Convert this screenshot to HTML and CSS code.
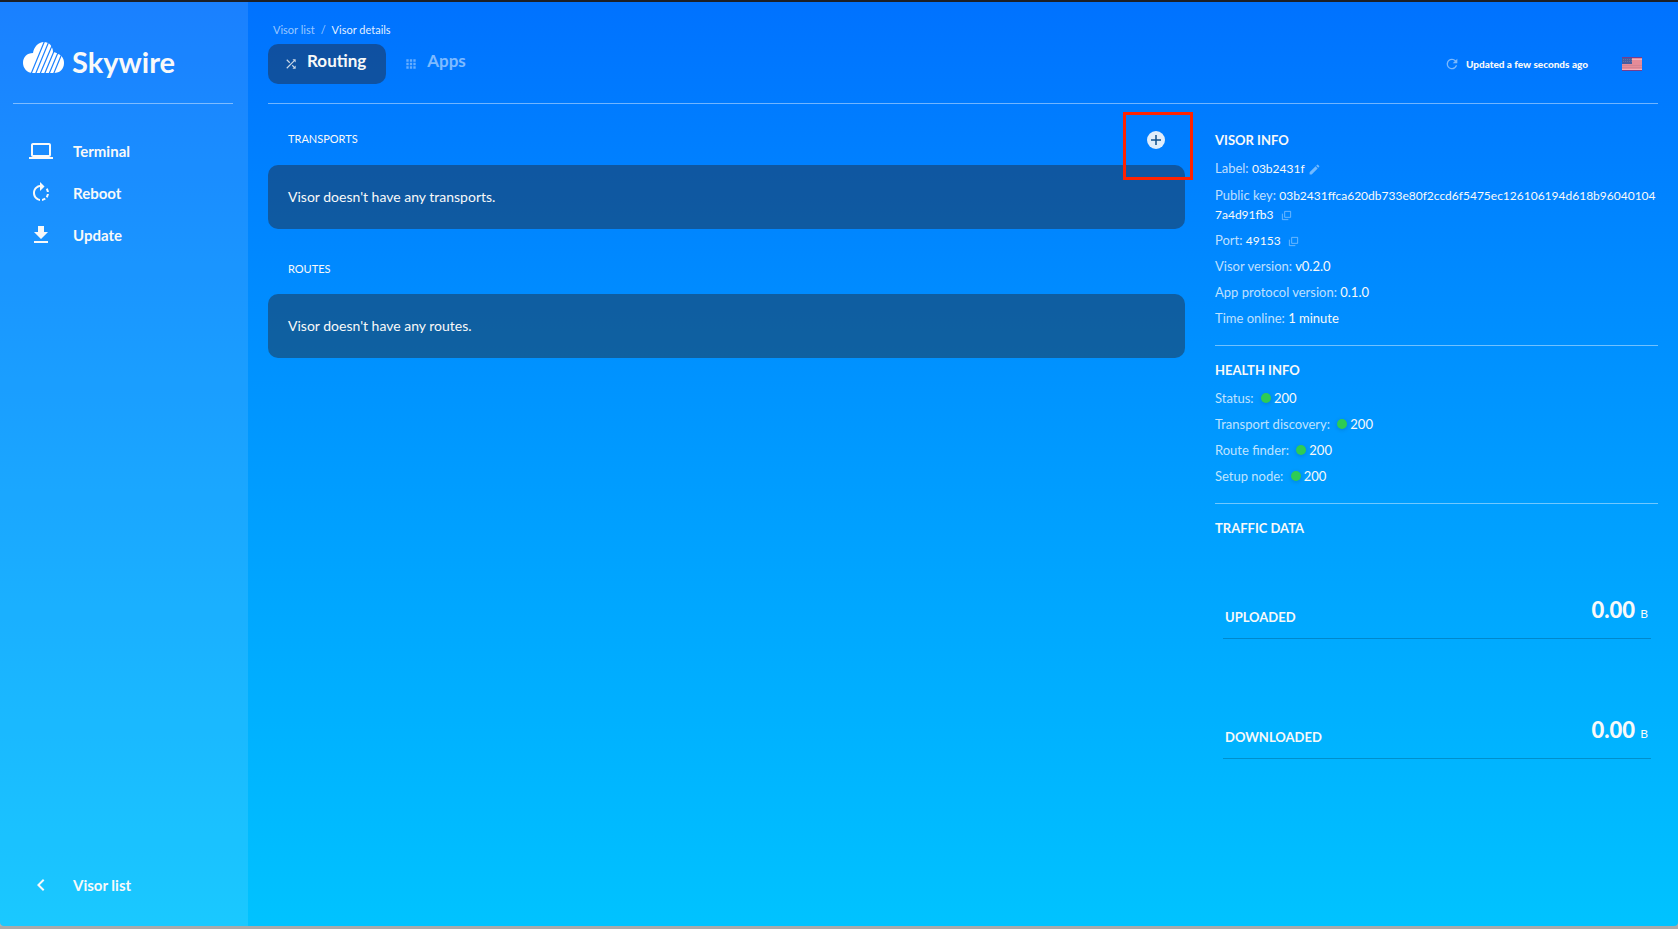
FILE: index.html
```html
<!DOCTYPE html>
<html lang="en">
<head>
<meta charset="utf-8">
<meta name="viewport" content="width=device-width, initial-scale=1">
<title>Skywire - Visor details</title>
<link rel="stylesheet" href="styles.css">
</head>
<body>
<svg class="defs" aria-hidden="true">
  <symbol id="copy" viewBox="0 0 24 24"><path d="M8 3h13v13H8zM3 8v13h13" fill="none" stroke="currentColor" stroke-width="2"/></symbol>
</svg>
<div class="app">
  <aside class="sidebar">
    <div class="brand">
      <svg class="cloud" viewBox="0 0 41 31" aria-hidden="true">
        <path fill="#fff" d="M10 31C4 31 0 26 0 21c0-6 4-10 10-10C11 5 15 0 21 0c5 0 9 4 9 10 2 0 4 1 5 2 4 1 6 5 6 9 0 6-4 10-10 10z"/>
        <path class="cuts" d="M8 32 22-2M12.500 32 26.500-2M17 32 31-1M21.500 32 34 2M26 32 36.500 7M30.500 32 40 9"/>
      </svg>
      <span>Skywire</span>
    </div>
    <nav class="menu">
      <button class="item" type="button">
        <svg viewBox="0 0 24 24"><path d="M20 18c1.100 0 1.990-.9 1.990-2L22 6c0-1.100-.9-2-2-2H4c-1.100 0-2 .9-2 2v10c0 1.100.9 2 2 2H0v2h24v-2h-4zM4 6h16v10H4V6z"/></svg>
        <span>Terminal</span>
      </button>
      <button class="item" type="button">
        <svg viewBox="0 0 24 24"><path d="M15.550 5.550 11 1v3.070C7.060 4.560 4 7.920 4 12s3.050 7.440 7 7.930v-2.020c-2.840-.48-5-2.940-5-5.910s2.160-5.430 5-5.910V10l4.550-4.450zM19.930 11c-.17-1.390-.72-2.730-1.620-3.890l-1.420 1.420c.54.75.88 1.600 1.020 2.470h2.020zM13 17.900v2.020c1.390-.17 2.740-.71 3.900-1.610l-1.440-1.440c-.75.54-1.590.89-2.460 1.030zm3.890-2.420 1.420 1.410c.9-1.160 1.450-2.500 1.620-3.890h-2.020c-.14.87-.48 1.720-1.020 2.480z"/></svg>
        <span>Reboot</span>
      </button>
      <button class="item" type="button">
        <svg viewBox="0 0 24 24"><path d="M19 9h-4V3H9v6H5l7 7 7-7zM5 18v2h14v-2H5z"/></svg>
        <span>Update</span>
      </button>
    </nav>
    <a class="item back" href="#list">
      <svg viewBox="0 0 24 24"><path d="M15.410 7.410 14 6l-6 6 6 6 1.410-1.410L10.830 12z"/></svg>
      <span>Visor list</span>
    </a>
  </aside>
  <div class="page">
    <header class="top">
      <div>
        <nav class="crumbs" aria-label="Breadcrumb"><a href="#list">Visor list</a><span>/</span><span class="here">Visor details</span></nav>
        <nav class="tabs">
          <a class="tab active" href="#routing"><svg viewBox="0 0 24 24"><path d="M10.590 9.170 5.410 4 4 5.410l5.170 5.170 1.420-1.410zM14.500 4l2.040 2.040L4 18.590 5.410 20 17.960 7.460 20 9.500V4h-5.500zm.33 9.410-1.410 1.410 3.130 3.130L14.500 20H20v-5.500l-2.040 2.040-3.130-3.130z"/></svg>Routing</a>
          <a class="tab" href="#apps"><svg viewBox="0 0 24 24"><path d="M4 4h4v4H4zM10 4h4v4h-4zM16 4h4v4h-4zM4 10h4v4H4zM10 10h4v4h-4zM16 10h4v4h-4zM4 16h4v4H4zM10 16h4v4h-4zM16 16h4v4h-4z"/></svg>Apps</a>
        </nav>
      </div>
      <div class="status">
        <button class="refresh" type="button"><svg viewBox="0 0 24 24"><path d="M17.650 6.350A7.960 7.960 0 0 0 12 4a8 8 0 1 0 7.730 10h-2.080A6 6 0 1 1 12 6c1.660 0 3.140.69 4.220 1.780L13 11h7V4z"/></svg>Updated a few seconds ago</button>
        <button class="language" type="button" aria-label="Language: English">
          <svg viewBox="0 0 20 14" aria-hidden="true"><path fill="#e58b98" d="M0 0h20v14H0z"/><path fill="#f4adb8" d="M10 2h10v1H10zM0 12h20v1H0z"/><path fill="#d58492" d="M0 8h20v1H0zM0 10h20v1H0z"/><path fill="#763d8e" d="M0 0h20v1H0zM0 13h20v1H0z"/><path fill="#455da0" d="M0 1h10v6H0z"/><path d="M1 2.500h9M1 4.500h9" stroke="#6473a1" stroke-dasharray="1 1"/></svg>
        </button>
      </div>
    </header>
    <div class="columns">
      <main class="lists">
        <section>
          <div class="list-head">
            <h2>Transports</h2>
            <button class="add" type="button" aria-label="Add transport"><svg viewBox="0 0 18 18"><circle cx="9" cy="9" r="9" fill="#e0edfb"/><path d="M9 4v10M4 9h10" stroke="#0f508c" stroke-width="1.500"/></svg></button>
          </div>
          <p class="card">Visor doesn't have any transports.</p>
        </section>
        <section>
          <div class="list-head"><h2>Routes</h2></div>
          <p class="card">Visor doesn't have any routes.</p>
        </section>
      </main>
      <aside class="details">
        <section class="block">
          <h3>Visor info</h3>
          <p>Label: <b class="hash">03b2431f</b> <button class="mini" type="button" aria-label="Edit label"><svg class="edit" viewBox="0 0 24 24"><path d="M3 17.250V21h3.750L17.810 9.940l-3.750-3.750L3 17.250zM20.710 7.040a1 1 0 0 0 0-1.410l-2.340-2.340a1 1 0 0 0-1.410 0l-1.830 1.830 3.750 3.750 1.830-1.830z"/></svg></button></p>
          <p class="key">Public key: <b class="hash">03b2431ffca620db733e80f2ccd6f5475ec126106194d618b960401047a4d91fb3</b> <button class="mini copy" type="button" aria-label="Copy public key"><svg><use href="#copy"/></svg></button></p>
          <p>Port: <b class="hash">49153</b> <button class="mini copy" type="button" aria-label="Copy port"><svg><use href="#copy"/></svg></button></p>
          <p>Visor version: <b>v0.2.0</b></p>
          <p>App protocol version: <b>0.1.0</b></p>
          <p>Time online: <b>1 minute</b></p>
        </section>
        <section class="block">
          <h3>Health info</h3>
          <p>Status: <i class="dot"></i><b>200</b></p>
          <p>Transport discovery: <i class="dot"></i><b>200</b></p>
          <p>Route finder: <i class="dot"></i><b>200</b></p>
          <p>Setup node: <i class="dot"></i><b>200</b></p>
        </section>
        <section class="block">
          <h3>Traffic data</h3>
          <div class="charts">
            <div class="traffic"><span class="name">Uploaded</span><span class="amount">0.00 <small>B</small></span></div>
            <div class="traffic"><span class="name">Downloaded</span><span class="amount">0.00 <small>B</small></span></div>
          </div>
        </section>
      </aside>
    </div>
  </div>
</div>
<div class="marker"></div>
</body>
</html>
```
FILE: styles.css
```css
* { box-sizing: border-box; }
body {
  margin: 0;
  background: #aaa;
  color: #f8f9f9;
  font-family: Lato, "Open Sans", sans-serif;
  font-size: 13px;
}
h2, h3, p { margin: 0; }
button { border: 0; padding: 0; background: none; color: inherit; font: inherit; cursor: pointer; }
a { color: inherit; text-decoration: none; }
svg { display: block; fill: currentColor; }
.defs { display: none; }

.app {
  display: flex;
  min-height: calc(100vh - 3px);
  border-top: 2px solid #1c1f26;
  border-radius: 0 0 4px 4px;
  background: linear-gradient(#0072ff, #00c3ff);
}

/* Sidebar */
.sidebar {
  display: flex;
  flex-direction: column;
  flex: 0 0 248px;
  padding: 0 15px 26px 13px;
  background: rgba(255, 255, 255, 0.1);
}
.brand {
  display: flex;
  align-items: center;
  gap: 8px;
  height: 102px;
  padding: 10px 0 0 10px;
  border-bottom: 1px solid rgba(255, 255, 255, 0.44);
  font-size: 29px;
  font-weight: 700;
}
.brand span { padding-top: 8px; }
.cloud { width: 41px; height: 31px; }
.cuts { fill: none; stroke: #1c82ff; stroke-width: 1.2; }
.menu { padding-top: 26px; }
.item {
  display: flex;
  align-items: center;
  gap: 20px;
  width: 100%;
  height: 42px;
  padding-left: 16px;
  font-size: 15px;
  font-weight: 700;
}
.item svg { width: 24px; height: 24px; }
.back { margin-top: auto; height: 30px; }

/* Header */
.page { flex: 1; min-width: 0; padding: 0 20px; }
.top {
  display: flex;
  justify-content: space-between;
  height: 102px;
  padding-top: 20px;
  border-bottom: 1px solid rgba(255, 255, 255, 0.44);
}
.crumbs {
  display: flex;
  gap: 6px;
  height: 22px;
  padding-left: 5px;
  font-size: 11px;
  line-height: 16px;
  color: rgba(255, 255, 255, 0.6);
}
.crumbs .here { color: rgba(255, 255, 255, 0.9); }
.tabs { display: flex; gap: 2px; }
.tab {
  display: flex;
  gap: 9px;
  height: 40px;
  padding: 0 20px 0 16px;
  border-radius: 10px;
  font-size: 17px;
  font-weight: 700;
  line-height: 34px;
  color: rgba(255, 255, 255, 0.5);
}
.tab.active { background: rgba(37, 26, 20, 0.4); color: #f8f9f9; }
.tab svg { width: 14px; height: 14px; margin-top: 13px; opacity: 0.8; }
.status { display: flex; align-items: center; gap: 34px; height: 44px; margin-top: 20px; padding-right: 16px; }
.refresh { display: flex; align-items: center; gap: 6px; font-size: 10px; font-weight: 900; }
.refresh svg { width: 16px; height: 16px; opacity: 0.5; }
.language svg { width: 20px; height: 14px; }

/* Lists */
.columns { display: flex; gap: 30px; }
.lists { flex: 1; min-width: 0; }
.list-head {
  display: flex;
  align-items: center;
  justify-content: space-between;
  height: 61px;
  padding: 8px 20px 0;
}
.lists section + section .list-head { height: 65px; padding-top: 14px; }
h2 { font-size: 11px; font-weight: 400; text-transform: uppercase; }
.add svg { width: 18px; height: 18px; }
.add { padding: 2px 0 0; }
.card {
  height: 64px;
  padding: 0 20px;
  border-radius: 10px;
  background: rgba(37, 26, 20, 0.4);
  font-size: 14px;
  line-height: 64px;
}

/* Details */
.details { flex: 0 0 443px; padding-top: 26px; }
.block + .block { border-top: 1px solid rgba(255, 255, 255, 0.44); margin-top: 17px; padding-top: 14px; }
h3 { font-size: 13px; line-height: 20px; margin-bottom: 9px; text-transform: uppercase; }
.block p { margin-bottom: 7px; line-height: 19px; color: rgba(255, 255, 255, 0.75); }
.block p b { font-weight: 400; color: #f8f9f9; }
.block .hash { font-size: 12px; }
.block .key { margin-top: 8px; word-break: break-all; }
.mini { display: inline-block; vertical-align: middle; opacity: 0.6; }
.mini svg { width: 11px; height: 11px; }
.mini .edit { width: 13px; height: 13px; }
.copy { margin-left: 4px; }
.dot {
  display: inline-block;
  width: 10px;
  height: 10px;
  margin: 0 3px 0 4px;
  border-radius: 50%;
  background: #2ecc54;
  box-shadow: 0 1px 4px rgba(0, 0, 0, 0.15);
}
.charts { display: grid; gap: 28px; margin: 0 7px 0 8px; }
.traffic {
  display: flex;
  align-items: flex-end;
  justify-content: space-between;
  height: 92px;
  padding: 0 3px 12px 2px;
  border-bottom: 1px solid rgba(0, 0, 0, 0.2);
}
.traffic .name { font-weight: 700; text-transform: uppercase; line-height: 18px; }
.amount { font-size: 22px; font-weight: 900; line-height: 24px; }
.amount small { font-size: 12px; font-weight: 400; }

/* Highlight frame over the add button */
.marker {
  position: absolute;
  top: 112px;
  right: 485px;
  width: 70px;
  height: 68px;
  border: 3px solid #ff2200;
  pointer-events: none;
}
```
